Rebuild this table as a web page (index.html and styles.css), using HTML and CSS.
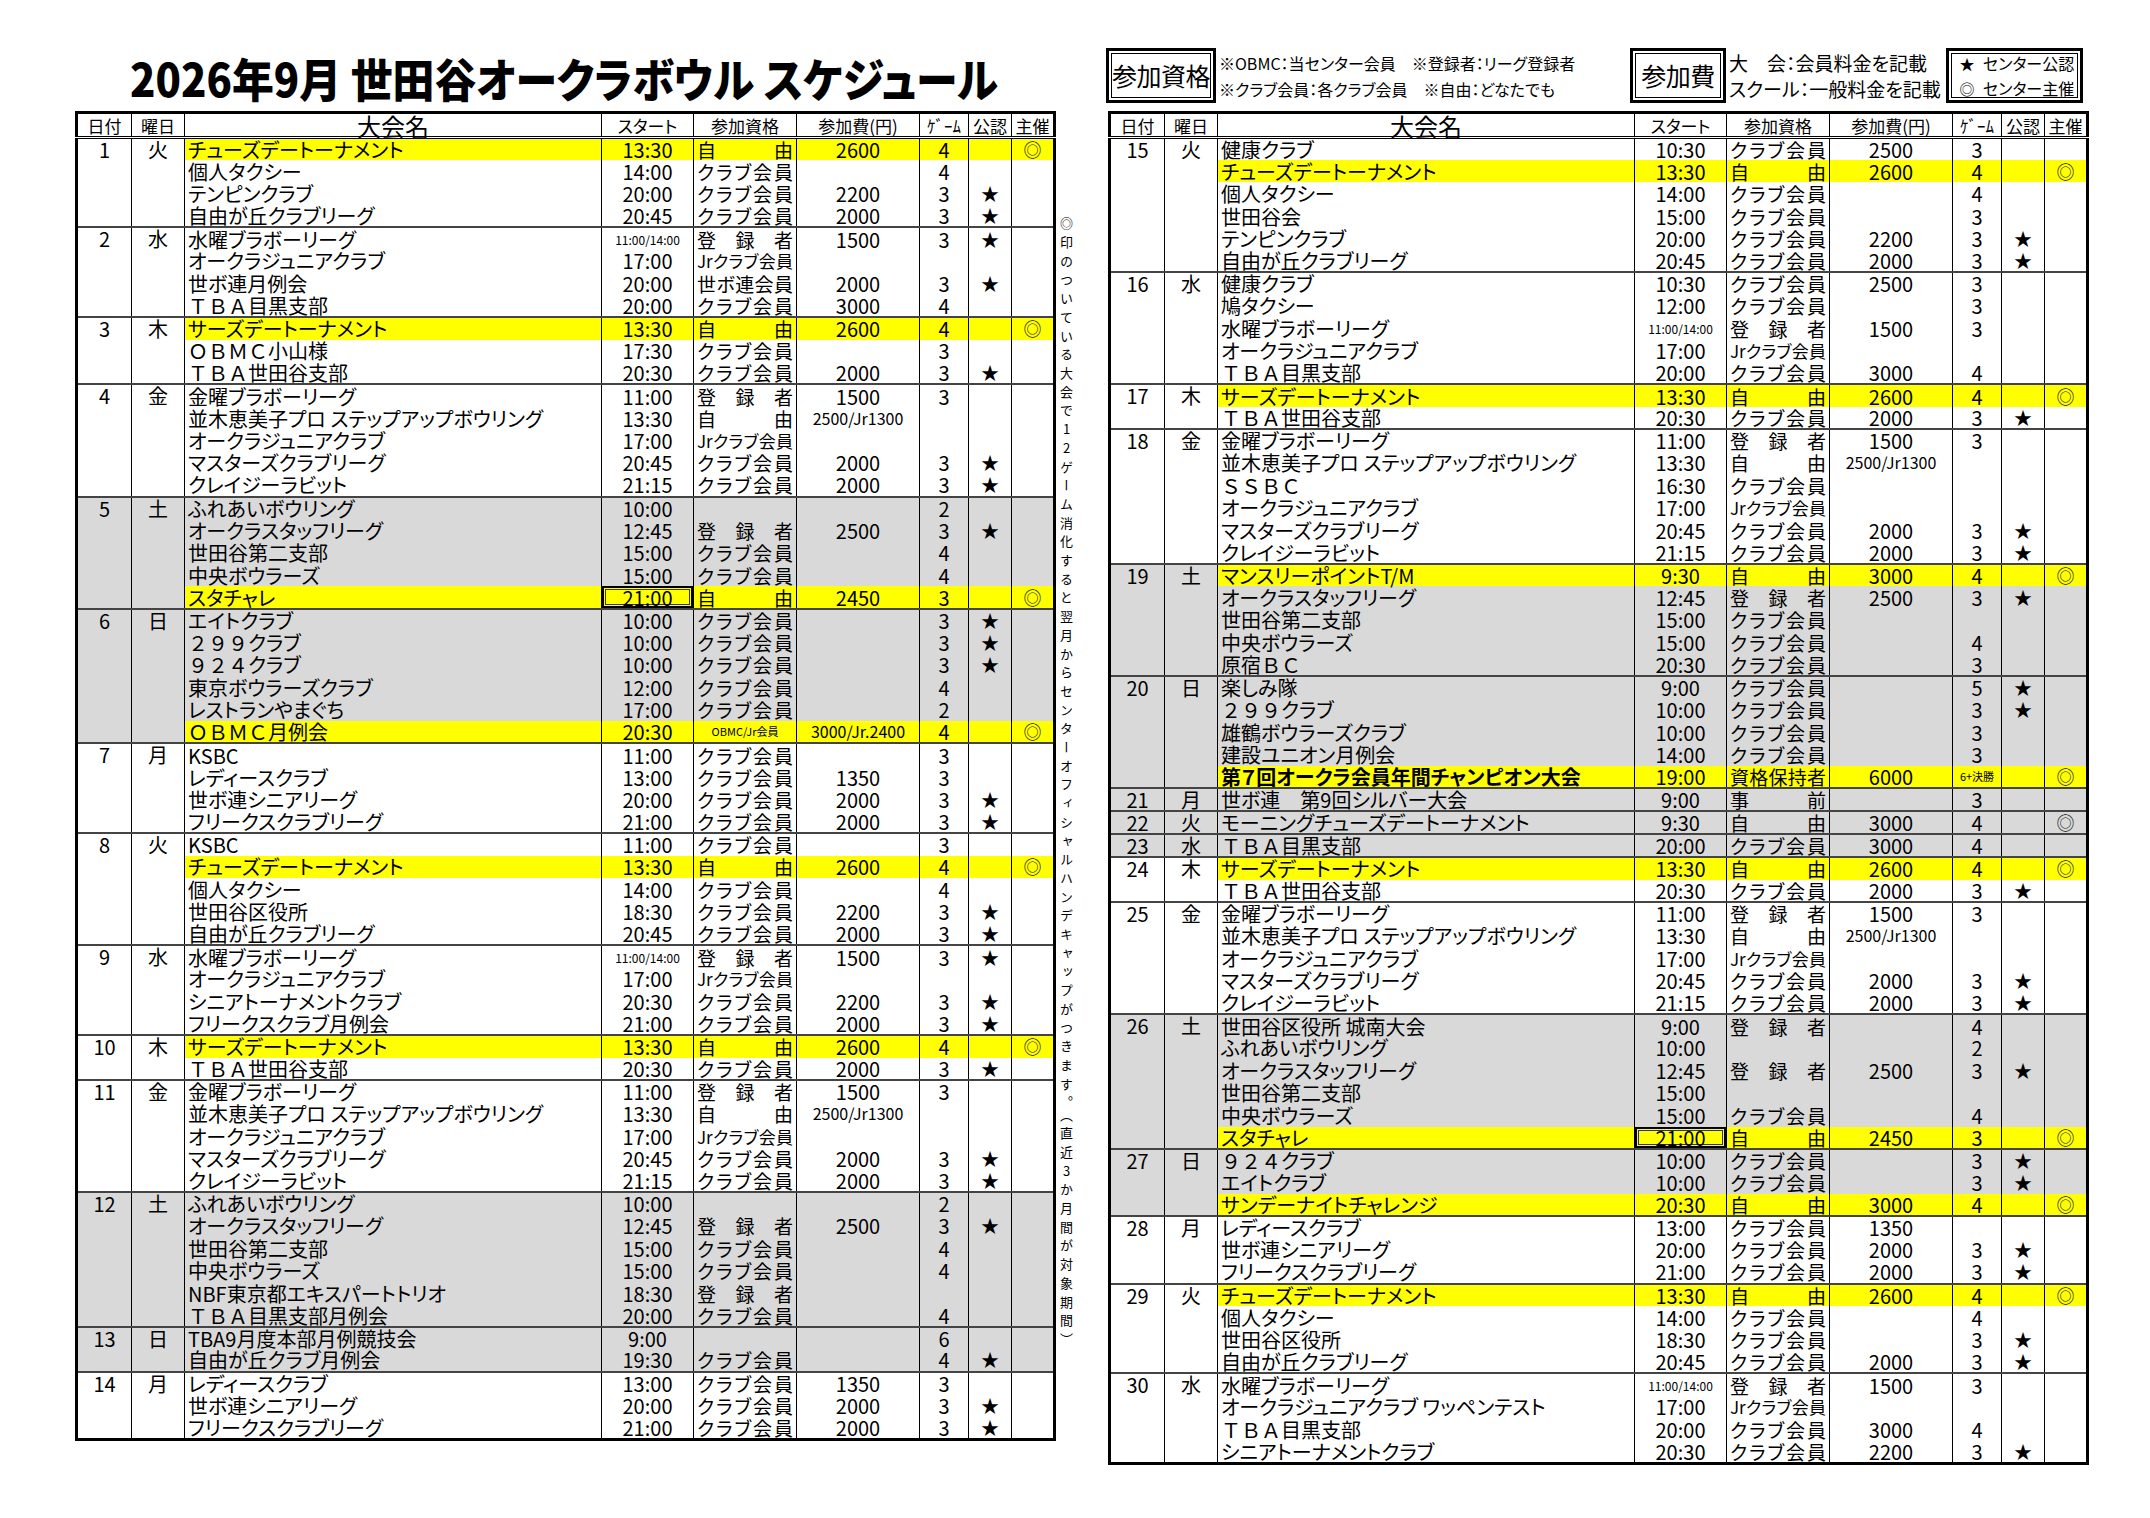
FILE: index.html
```html
<!DOCTYPE html>
<html lang="ja">
<head>
<meta charset="utf-8">
<title>2026年9月 世田谷オークラボウル スケジュール</title>
<link rel="stylesheet" href="styles.css">
</head>
<body>
<div class="page">
  <section class="left">
    <h1 class="title">2026年9月 世田谷オークラボウル スケジュール</h1>
    <table class="tb">
      <colgroup><col class="c1"><col class="c2"><col class="c3"><col class="c4"><col class="c5"><col class="c6"><col class="c7"><col class="c8"><col class="c9"></colgroup>
      <thead><tr><th>日付</th><th>曜日</th><th class="big">大会名</th><th>スタート</th><th>参加資格</th><th>参加費(円)</th><th>ｹﾞｰﾑ</th><th>公認</th><th>主催</th></tr></thead>
      <tbody>
        <tr class="y"><td class="dt" rowspan="4">1</td><td class="wd" rowspan="4">火</td><td class="n">チューズデートーナメント</td><td>13:30</td><td class="q">自 由</td><td>2600</td><td>4</td><td></td><td>◎</td></tr>
        <tr><td class="n">個人タクシー</td><td>14:00</td><td class="q">クラブ会員</td><td></td><td>4</td><td></td><td></td></tr>
        <tr><td class="n">テンピンクラブ</td><td>20:00</td><td class="q">クラブ会員</td><td>2200</td><td>3</td><td>★</td><td></td></tr>
        <tr><td class="n">自由が丘クラブリーグ</td><td>20:45</td><td class="q">クラブ会員</td><td>2000</td><td>3</td><td>★</td><td></td></tr>
      </tbody>
      <tbody>
        <tr><td class="dt" rowspan="4">2</td><td class="wd" rowspan="4">水</td><td class="n">水曜ブラボーリーグ</td><td class="s">11:00/14:00</td><td class="q">登 録 者</td><td>1500</td><td>3</td><td>★</td><td></td></tr>
        <tr><td class="n">オークラジュニアクラブ</td><td>17:00</td><td class="q jr">Jrクラブ会員</td><td></td><td></td><td></td><td></td></tr>
        <tr><td class="n">世ボ連月例会</td><td>20:00</td><td class="q">世ボ連会員</td><td>2000</td><td>3</td><td>★</td><td></td></tr>
        <tr><td class="n"><span class="fw">ＴＢＡ</span>目黒支部</td><td>20:00</td><td class="q">クラブ会員</td><td>3000</td><td>4</td><td></td><td></td></tr>
      </tbody>
      <tbody>
        <tr class="y"><td class="dt" rowspan="3">3</td><td class="wd" rowspan="3">木</td><td class="n">サーズデートーナメント</td><td>13:30</td><td class="q">自 由</td><td>2600</td><td>4</td><td></td><td>◎</td></tr>
        <tr><td class="n"><span class="fw">ＯＢＭＣ</span>小山様</td><td>17:30</td><td class="q">クラブ会員</td><td></td><td>3</td><td></td><td></td></tr>
        <tr><td class="n"><span class="fw">ＴＢＡ</span>世田谷支部</td><td>20:30</td><td class="q">クラブ会員</td><td>2000</td><td>3</td><td>★</td><td></td></tr>
      </tbody>
      <tbody>
        <tr><td class="dt" rowspan="5">4</td><td class="wd" rowspan="5">金</td><td class="n">金曜ブラボーリーグ</td><td>11:00</td><td class="q">登 録 者</td><td>1500</td><td>3</td><td></td><td></td></tr>
        <tr><td class="n">並木恵美子プロ ステップアップボウリング</td><td>13:30</td><td class="q">自 由</td><td class="s2">2500/Jr1300</td><td></td><td></td><td></td></tr>
        <tr><td class="n">オークラジュニアクラブ</td><td>17:00</td><td class="q jr">Jrクラブ会員</td><td></td><td></td><td></td><td></td></tr>
        <tr><td class="n">マスターズクラブリーグ</td><td>20:45</td><td class="q">クラブ会員</td><td>2000</td><td>3</td><td>★</td><td></td></tr>
        <tr><td class="n">クレイジーラビット</td><td>21:15</td><td class="q">クラブ会員</td><td>2000</td><td>3</td><td>★</td><td></td></tr>
      </tbody>
      <tbody class="g">
        <tr><td class="dt" rowspan="5">5</td><td class="wd" rowspan="5">土</td><td class="n">ふれあいボウリング</td><td>10:00</td><td class="q"></td><td></td><td>2</td><td></td><td></td></tr>
        <tr><td class="n">オークラスタッフリーグ</td><td>12:45</td><td class="q">登 録 者</td><td>2500</td><td>3</td><td>★</td><td></td></tr>
        <tr><td class="n">世田谷第二支部</td><td>15:00</td><td class="q">クラブ会員</td><td></td><td>4</td><td></td><td></td></tr>
        <tr><td class="n">中央ボウラーズ</td><td>15:00</td><td class="q">クラブ会員</td><td></td><td>4</td><td></td><td></td></tr>
        <tr class="y"><td class="n">スタチャレ</td><td class="bx">21:00</td><td class="q">自 由</td><td>2450</td><td>3</td><td></td><td>◎</td></tr>
      </tbody>
      <tbody class="g">
        <tr><td class="dt" rowspan="6">6</td><td class="wd" rowspan="6">日</td><td class="n">エイトクラブ</td><td>10:00</td><td class="q">クラブ会員</td><td></td><td>3</td><td>★</td><td></td></tr>
        <tr><td class="n"><span class="fw">２９９</span>クラブ</td><td>10:00</td><td class="q">クラブ会員</td><td></td><td>3</td><td>★</td><td></td></tr>
        <tr><td class="n"><span class="fw">９２４</span>クラブ</td><td>10:00</td><td class="q">クラブ会員</td><td></td><td>3</td><td>★</td><td></td></tr>
        <tr><td class="n">東京ボウラーズクラブ</td><td>12:00</td><td class="q">クラブ会員</td><td></td><td>4</td><td></td><td></td></tr>
        <tr><td class="n">レストランやまぐち</td><td>17:00</td><td class="q">クラブ会員</td><td></td><td>2</td><td></td><td></td></tr>
        <tr class="y"><td class="n"><span class="fw">ＯＢＭＣ</span>月例会</td><td>20:30</td><td class="q s3">OBMC/Jr会員</td><td class="s2">3000/Jr.2400</td><td>4</td><td></td><td>◎</td></tr>
      </tbody>
      <tbody>
        <tr><td class="dt" rowspan="4">7</td><td class="wd" rowspan="4">月</td><td class="n">KSBC</td><td>11:00</td><td class="q">クラブ会員</td><td></td><td>3</td><td></td><td></td></tr>
        <tr><td class="n">レディースクラブ</td><td>13:00</td><td class="q">クラブ会員</td><td>1350</td><td>3</td><td></td><td></td></tr>
        <tr><td class="n">世ボ連シニアリーグ</td><td>20:00</td><td class="q">クラブ会員</td><td>2000</td><td>3</td><td>★</td><td></td></tr>
        <tr><td class="n">フリークスクラブリーグ</td><td>21:00</td><td class="q">クラブ会員</td><td>2000</td><td>3</td><td>★</td><td></td></tr>
      </tbody>
      <tbody>
        <tr><td class="dt" rowspan="5">8</td><td class="wd" rowspan="5">火</td><td class="n">KSBC</td><td>11:00</td><td class="q">クラブ会員</td><td></td><td>3</td><td></td><td></td></tr>
        <tr class="y"><td class="n">チューズデートーナメント</td><td>13:30</td><td class="q">自 由</td><td>2600</td><td>4</td><td></td><td>◎</td></tr>
        <tr><td class="n">個人タクシー</td><td>14:00</td><td class="q">クラブ会員</td><td></td><td>4</td><td></td><td></td></tr>
        <tr><td class="n">世田谷区役所</td><td>18:30</td><td class="q">クラブ会員</td><td>2200</td><td>3</td><td>★</td><td></td></tr>
        <tr><td class="n">自由が丘クラブリーグ</td><td>20:45</td><td class="q">クラブ会員</td><td>2000</td><td>3</td><td>★</td><td></td></tr>
      </tbody>
      <tbody>
        <tr><td class="dt" rowspan="4">9</td><td class="wd" rowspan="4">水</td><td class="n">水曜ブラボーリーグ</td><td class="s">11:00/14:00</td><td class="q">登 録 者</td><td>1500</td><td>3</td><td>★</td><td></td></tr>
        <tr><td class="n">オークラジュニアクラブ</td><td>17:00</td><td class="q jr">Jrクラブ会員</td><td></td><td></td><td></td><td></td></tr>
        <tr><td class="n">シニアトーナメントクラブ</td><td>20:30</td><td class="q">クラブ会員</td><td>2200</td><td>3</td><td>★</td><td></td></tr>
        <tr><td class="n">フリークスクラブ月例会</td><td>21:00</td><td class="q">クラブ会員</td><td>2000</td><td>3</td><td>★</td><td></td></tr>
      </tbody>
      <tbody>
        <tr class="y"><td class="dt" rowspan="2">10</td><td class="wd" rowspan="2">木</td><td class="n">サーズデートーナメント</td><td>13:30</td><td class="q">自 由</td><td>2600</td><td>4</td><td></td><td>◎</td></tr>
        <tr><td class="n"><span class="fw">ＴＢＡ</span>世田谷支部</td><td>20:30</td><td class="q">クラブ会員</td><td>2000</td><td>3</td><td>★</td><td></td></tr>
      </tbody>
      <tbody>
        <tr><td class="dt" rowspan="5">11</td><td class="wd" rowspan="5">金</td><td class="n">金曜ブラボーリーグ</td><td>11:00</td><td class="q">登 録 者</td><td>1500</td><td>3</td><td></td><td></td></tr>
        <tr><td class="n">並木恵美子プロ ステップアップボウリング</td><td>13:30</td><td class="q">自 由</td><td class="s2">2500/Jr1300</td><td></td><td></td><td></td></tr>
        <tr><td class="n">オークラジュニアクラブ</td><td>17:00</td><td class="q jr">Jrクラブ会員</td><td></td><td></td><td></td><td></td></tr>
        <tr><td class="n">マスターズクラブリーグ</td><td>20:45</td><td class="q">クラブ会員</td><td>2000</td><td>3</td><td>★</td><td></td></tr>
        <tr><td class="n">クレイジーラビット</td><td>21:15</td><td class="q">クラブ会員</td><td>2000</td><td>3</td><td>★</td><td></td></tr>
      </tbody>
      <tbody class="g">
        <tr><td class="dt" rowspan="6">12</td><td class="wd" rowspan="6">土</td><td class="n">ふれあいボウリング</td><td>10:00</td><td class="q"></td><td></td><td>2</td><td></td><td></td></tr>
        <tr><td class="n">オークラスタッフリーグ</td><td>12:45</td><td class="q">登 録 者</td><td>2500</td><td>3</td><td>★</td><td></td></tr>
        <tr><td class="n">世田谷第二支部</td><td>15:00</td><td class="q">クラブ会員</td><td></td><td>4</td><td></td><td></td></tr>
        <tr><td class="n">中央ボウラーズ</td><td>15:00</td><td class="q">クラブ会員</td><td></td><td>4</td><td></td><td></td></tr>
        <tr><td class="n">NBF東京都エキスパートトリオ</td><td>18:30</td><td class="q">登 録 者</td><td></td><td></td><td></td><td></td></tr>
        <tr><td class="n"><span class="fw">ＴＢＡ</span>目黒支部月例会</td><td>20:00</td><td class="q">クラブ会員</td><td></td><td>4</td><td></td><td></td></tr>
      </tbody>
      <tbody class="g">
        <tr><td class="dt" rowspan="2">13</td><td class="wd" rowspan="2">日</td><td class="n">TBA9月度本部月例競技会</td><td>9:00</td><td class="q"></td><td></td><td>6</td><td></td><td></td></tr>
        <tr><td class="n">自由が丘クラブ月例会</td><td>19:30</td><td class="q">クラブ会員</td><td></td><td>4</td><td>★</td><td></td></tr>
      </tbody>
      <tbody>
        <tr><td class="dt" rowspan="3">14</td><td class="wd" rowspan="3">月</td><td class="n">レディースクラブ</td><td>13:00</td><td class="q">クラブ会員</td><td>1350</td><td>3</td><td></td><td></td></tr>
        <tr><td class="n">世ボ連シニアリーグ</td><td>20:00</td><td class="q">クラブ会員</td><td>2000</td><td>3</td><td>★</td><td></td></tr>
        <tr><td class="n">フリークスクラブリーグ</td><td>21:00</td><td class="q">クラブ会員</td><td>2000</td><td>3</td><td>★</td><td></td></tr>
      </tbody>
    </table>
  </section>

  <aside class="note"><p class="vt">◎印のついている大会で12ゲーム消化すると翌月からセンターオフィシャルハンデキャップがつきます。（直近3か月間が対象期間）</p></aside>

  <section class="right">
    <div class="legend">
      <div class="box b1"><div class="inner">参加資格</div></div>
      <div class="ltxt l1"><p>※OBMC：当センター会員　※登録者：リーグ登録者</p><p>※クラブ会員：各クラブ会員　※自由：どなたでも</p></div>
      <div class="box b2"><div class="inner">参加費</div></div>
      <div class="ltxt l2"><p>大　会：会員料金を記載</p><p>スクール：一般料金を記載</p></div>
      <div class="box b3"><div class="inner col"><p><span class="mk">★</span>センター公認</p><p><span class="mk">◎</span>センター主催</p></div></div>
    </div>
    <table class="tb">
      <colgroup><col class="c1"><col class="c2"><col class="c3"><col class="c4"><col class="c5"><col class="c6"><col class="c7"><col class="c8"><col class="c9"></colgroup>
      <thead><tr><th>日付</th><th>曜日</th><th class="big">大会名</th><th>スタート</th><th>参加資格</th><th>参加費(円)</th><th>ｹﾞｰﾑ</th><th>公認</th><th>主催</th></tr></thead>
      <tbody>
        <tr><td class="dt" rowspan="6">15</td><td class="wd" rowspan="6">火</td><td class="n">健康クラブ</td><td>10:30</td><td class="q">クラブ会員</td><td>2500</td><td>3</td><td></td><td></td></tr>
        <tr class="y"><td class="n">チューズデートーナメント</td><td>13:30</td><td class="q">自 由</td><td>2600</td><td>4</td><td></td><td>◎</td></tr>
        <tr><td class="n">個人タクシー</td><td>14:00</td><td class="q">クラブ会員</td><td></td><td>4</td><td></td><td></td></tr>
        <tr><td class="n">世田谷会</td><td>15:00</td><td class="q">クラブ会員</td><td></td><td>3</td><td></td><td></td></tr>
        <tr><td class="n">テンピンクラブ</td><td>20:00</td><td class="q">クラブ会員</td><td>2200</td><td>3</td><td>★</td><td></td></tr>
        <tr><td class="n">自由が丘クラブリーグ</td><td>20:45</td><td class="q">クラブ会員</td><td>2000</td><td>3</td><td>★</td><td></td></tr>
      </tbody>
      <tbody>
        <tr><td class="dt" rowspan="5">16</td><td class="wd" rowspan="5">水</td><td class="n">健康クラブ</td><td>10:30</td><td class="q">クラブ会員</td><td>2500</td><td>3</td><td></td><td></td></tr>
        <tr><td class="n">鳩タクシー</td><td>12:00</td><td class="q">クラブ会員</td><td></td><td>3</td><td></td><td></td></tr>
        <tr><td class="n">水曜ブラボーリーグ</td><td class="s">11:00/14:00</td><td class="q">登 録 者</td><td>1500</td><td>3</td><td></td><td></td></tr>
        <tr><td class="n">オークラジュニアクラブ</td><td>17:00</td><td class="q jr">Jrクラブ会員</td><td></td><td></td><td></td><td></td></tr>
        <tr><td class="n"><span class="fw">ＴＢＡ</span>目黒支部</td><td>20:00</td><td class="q">クラブ会員</td><td>3000</td><td>4</td><td></td><td></td></tr>
      </tbody>
      <tbody>
        <tr class="y"><td class="dt" rowspan="2">17</td><td class="wd" rowspan="2">木</td><td class="n">サーズデートーナメント</td><td>13:30</td><td class="q">自 由</td><td>2600</td><td>4</td><td></td><td>◎</td></tr>
        <tr><td class="n"><span class="fw">ＴＢＡ</span>世田谷支部</td><td>20:30</td><td class="q">クラブ会員</td><td>2000</td><td>3</td><td>★</td><td></td></tr>
      </tbody>
      <tbody>
        <tr><td class="dt" rowspan="6">18</td><td class="wd" rowspan="6">金</td><td class="n">金曜ブラボーリーグ</td><td>11:00</td><td class="q">登 録 者</td><td>1500</td><td>3</td><td></td><td></td></tr>
        <tr><td class="n">並木恵美子プロ ステップアップボウリング</td><td>13:30</td><td class="q">自 由</td><td class="s2">2500/Jr1300</td><td></td><td></td><td></td></tr>
        <tr><td class="n"><span class="fw">ＳＳＢＣ</span></td><td>16:30</td><td class="q">クラブ会員</td><td></td><td></td><td></td><td></td></tr>
        <tr><td class="n">オークラジュニアクラブ</td><td>17:00</td><td class="q jr">Jrクラブ会員</td><td></td><td></td><td></td><td></td></tr>
        <tr><td class="n">マスターズクラブリーグ</td><td>20:45</td><td class="q">クラブ会員</td><td>2000</td><td>3</td><td>★</td><td></td></tr>
        <tr><td class="n">クレイジーラビット</td><td>21:15</td><td class="q">クラブ会員</td><td>2000</td><td>3</td><td>★</td><td></td></tr>
      </tbody>
      <tbody class="g">
        <tr class="y"><td class="dt" rowspan="5">19</td><td class="wd" rowspan="5">土</td><td class="n">マンスリーポイントT/M</td><td>9:30</td><td class="q">自 由</td><td>3000</td><td>4</td><td></td><td>◎</td></tr>
        <tr><td class="n">オークラスタッフリーグ</td><td>12:45</td><td class="q">登 録 者</td><td>2500</td><td>3</td><td>★</td><td></td></tr>
        <tr><td class="n">世田谷第二支部</td><td>15:00</td><td class="q">クラブ会員</td><td></td><td></td><td></td><td></td></tr>
        <tr><td class="n">中央ボウラーズ</td><td>15:00</td><td class="q">クラブ会員</td><td></td><td>4</td><td></td><td></td></tr>
        <tr><td class="n">原宿<span class="fw">ＢＣ</span></td><td>20:30</td><td class="q">クラブ会員</td><td></td><td>3</td><td></td><td></td></tr>
      </tbody>
      <tbody class="g">
        <tr><td class="dt" rowspan="5">20</td><td class="wd" rowspan="5">日</td><td class="n">楽しみ隊</td><td>9:00</td><td class="q">クラブ会員</td><td></td><td>5</td><td>★</td><td></td></tr>
        <tr><td class="n"><span class="fw">２９９</span>クラブ</td><td>10:00</td><td class="q">クラブ会員</td><td></td><td>3</td><td>★</td><td></td></tr>
        <tr><td class="n">雄鶴ボウラーズクラブ</td><td>10:00</td><td class="q">クラブ会員</td><td></td><td>3</td><td></td><td></td></tr>
        <tr><td class="n">建設ユニオン月例会</td><td>14:00</td><td class="q">クラブ会員</td><td></td><td>3</td><td></td><td></td></tr>
        <tr class="y"><td class="n bold">第７回オークラ会員年間チャンピオン大会</td><td>19:00</td><td class="q">資格保持者</td><td>6000</td><td class="s3">6+決勝</td><td></td><td>◎</td></tr>
      </tbody>
      <tbody class="g">
        <tr><td class="dt">21</td><td class="wd">月</td><td class="n">世ボ連　第9回シルバー大会</td><td>9:00</td><td class="q">事 前</td><td></td><td>3</td><td></td><td></td></tr>
      </tbody>
      <tbody class="g">
        <tr><td class="dt">22</td><td class="wd">火</td><td class="n">モーニングチューズデートーナメント</td><td>9:30</td><td class="q">自 由</td><td>3000</td><td>4</td><td></td><td>◎</td></tr>
      </tbody>
      <tbody class="g">
        <tr><td class="dt">23</td><td class="wd">水</td><td class="n"><span class="fw">ＴＢＡ</span>目黒支部</td><td>20:00</td><td class="q">クラブ会員</td><td>3000</td><td>4</td><td></td><td></td></tr>
      </tbody>
      <tbody>
        <tr class="y"><td class="dt" rowspan="2">24</td><td class="wd" rowspan="2">木</td><td class="n">サーズデートーナメント</td><td>13:30</td><td class="q">自 由</td><td>2600</td><td>4</td><td></td><td>◎</td></tr>
        <tr><td class="n"><span class="fw">ＴＢＡ</span>世田谷支部</td><td>20:30</td><td class="q">クラブ会員</td><td>2000</td><td>3</td><td>★</td><td></td></tr>
      </tbody>
      <tbody>
        <tr><td class="dt" rowspan="5">25</td><td class="wd" rowspan="5">金</td><td class="n">金曜ブラボーリーグ</td><td>11:00</td><td class="q">登 録 者</td><td>1500</td><td>3</td><td></td><td></td></tr>
        <tr><td class="n">並木恵美子プロ ステップアップボウリング</td><td>13:30</td><td class="q">自 由</td><td class="s2">2500/Jr1300</td><td></td><td></td><td></td></tr>
        <tr><td class="n">オークラジュニアクラブ</td><td>17:00</td><td class="q jr">Jrクラブ会員</td><td></td><td></td><td></td><td></td></tr>
        <tr><td class="n">マスターズクラブリーグ</td><td>20:45</td><td class="q">クラブ会員</td><td>2000</td><td>3</td><td>★</td><td></td></tr>
        <tr><td class="n">クレイジーラビット</td><td>21:15</td><td class="q">クラブ会員</td><td>2000</td><td>3</td><td>★</td><td></td></tr>
      </tbody>
      <tbody class="g">
        <tr><td class="dt" rowspan="6">26</td><td class="wd" rowspan="6">土</td><td class="n">世田谷区役所 城南大会</td><td>9:00</td><td class="q">登 録 者</td><td></td><td>4</td><td></td><td></td></tr>
        <tr><td class="n">ふれあいボウリング</td><td>10:00</td><td class="q"></td><td></td><td>2</td><td></td><td></td></tr>
        <tr><td class="n">オークラスタッフリーグ</td><td>12:45</td><td class="q">登 録 者</td><td>2500</td><td>3</td><td>★</td><td></td></tr>
        <tr><td class="n">世田谷第二支部</td><td>15:00</td><td class="q"></td><td></td><td></td><td></td><td></td></tr>
        <tr><td class="n">中央ボウラーズ</td><td>15:00</td><td class="q">クラブ会員</td><td></td><td>4</td><td></td><td></td></tr>
        <tr class="y"><td class="n">スタチャレ</td><td class="bx">21:00</td><td class="q">自 由</td><td>2450</td><td>3</td><td></td><td>◎</td></tr>
      </tbody>
      <tbody class="g">
        <tr><td class="dt" rowspan="3">27</td><td class="wd" rowspan="3">日</td><td class="n"><span class="fw">９２４</span>クラブ</td><td>10:00</td><td class="q">クラブ会員</td><td></td><td>3</td><td>★</td><td></td></tr>
        <tr><td class="n">エイトクラブ</td><td>10:00</td><td class="q">クラブ会員</td><td></td><td>3</td><td>★</td><td></td></tr>
        <tr class="y"><td class="n">サンデーナイトチャレンジ</td><td>20:30</td><td class="q">自 由</td><td>3000</td><td>4</td><td></td><td>◎</td></tr>
      </tbody>
      <tbody>
        <tr><td class="dt" rowspan="3">28</td><td class="wd" rowspan="3">月</td><td class="n">レディースクラブ</td><td>13:00</td><td class="q">クラブ会員</td><td>1350</td><td></td><td></td><td></td></tr>
        <tr><td class="n">世ボ連シニアリーグ</td><td>20:00</td><td class="q">クラブ会員</td><td>2000</td><td>3</td><td>★</td><td></td></tr>
        <tr><td class="n">フリークスクラブリーグ</td><td>21:00</td><td class="q">クラブ会員</td><td>2000</td><td>3</td><td>★</td><td></td></tr>
      </tbody>
      <tbody>
        <tr class="y"><td class="dt" rowspan="4">29</td><td class="wd" rowspan="4">火</td><td class="n">チューズデートーナメント</td><td>13:30</td><td class="q">自 由</td><td>2600</td><td>4</td><td></td><td>◎</td></tr>
        <tr><td class="n">個人タクシー</td><td>14:00</td><td class="q">クラブ会員</td><td></td><td>4</td><td></td><td></td></tr>
        <tr><td class="n">世田谷区役所</td><td>18:30</td><td class="q">クラブ会員</td><td></td><td>3</td><td>★</td><td></td></tr>
        <tr><td class="n">自由が丘クラブリーグ</td><td>20:45</td><td class="q">クラブ会員</td><td>2000</td><td>3</td><td>★</td><td></td></tr>
      </tbody>
      <tbody>
        <tr><td class="dt" rowspan="4">30</td><td class="wd" rowspan="4">水</td><td class="n">水曜ブラボーリーグ</td><td class="s">11:00/14:00</td><td class="q">登 録 者</td><td>1500</td><td>3</td><td></td><td></td></tr>
        <tr><td class="n">オークラジュニアクラブ ワッペンテスト</td><td>17:00</td><td class="q jr">Jrクラブ会員</td><td></td><td></td><td></td><td></td></tr>
        <tr><td class="n"><span class="fw">ＴＢＡ</span>目黒支部</td><td>20:00</td><td class="q">クラブ会員</td><td>3000</td><td>4</td><td></td><td></td></tr>
        <tr><td class="n">シニアトーナメントクラブ</td><td>20:30</td><td class="q">クラブ会員</td><td>2200</td><td>3</td><td>★</td><td></td></tr>
      </tbody>
    </table>
  </section>
</div>
</body>
</html>
```

FILE: styles.css
```css
* { box-sizing: border-box; }
html, body { margin: 0; padding: 0; background: #fff; }
body {
  color: #000;
  font-family: "Noto Sans CJK JP", "Noto Sans", sans-serif;
  font-feature-settings: "palt";
}
p { margin: 0; }

.page {
  display: flex;
  align-items: flex-start;
  width: 2150px;
  height: 1518px;
  padding-left: 75px;
}

.left, .right { width: 978px; flex: none; }

.title {
  margin: 52px 0 9px;
  height: 50px;
  line-height: 50px;
  font-size: 46px;
  font-weight: 900;
  text-align: center;
  white-space: nowrap;
  transform: scaleX(0.91);
}

.note { width: 55px; flex: none; padding: 217px 0 0 7px; }
.vt {
  writing-mode: vertical-rl;
  text-orientation: upright;
  font-size: 13px;
  line-height: 13px;
  letter-spacing: 5.7px;
  font-feature-settings: normal;
}

/* legend */
.legend { display: flex; height: 55px; margin: 48px 0 8px -2px; }
.box { border: 3px solid #000; padding: 2px; display: flex; flex: none; }
.box .inner {
  flex: 1;
  border: 1.5px solid #000;
  display: flex;
  align-items: center;
  justify-content: center;
  font-size: 25px;
  line-height: 1;
  letter-spacing: -0.5px;
  white-space: nowrap;
}
.b1 { width: 110px; }
.b2 { width: 96px; }
.b3 { width: 137px; }
.box .inner.col {
  flex-direction: column;
  align-items: flex-start;
  justify-content: center;
  padding-left: 7px;
  font-size: 16px;
  line-height: 20px;
  gap: 4px;
  letter-spacing: 0;
}
.mk { display: inline-block; width: 16px; margin-right: 8px; text-align: center; font-size: 15px; }
.ltxt { display: flex; flex-direction: column; justify-content: center; gap: 6px; white-space: nowrap; }
.l1 { width: 414px; padding-left: 3px; font-size: 16px; line-height: 20px; }
.l2 { width: 220px; padding-left: 3px; font-size: 19px; line-height: 22px; gap: 4px; }

/* tables */
.tb {
  width: 978px;
  border-collapse: collapse;
  table-layout: fixed;
  border: 3px solid #000;
}
.c1 { width: 55px; } .c2 { width: 53px; } .c3 { width: 417px; }
.c4 { width: 92px; } .c5 { width: 103px; } .c6 { width: 123px; }
.c7 { width: 49px; } .c8 { width: 43px; } .c9 { width: 43px; }

.tb th {
  height: 25px;
  padding: 0;
  font-size: 17px;
  font-weight: 400;
  line-height: 21px;
  border: 1px solid #000;
  border-bottom: 3px double #000;
  white-space: nowrap;
}
.tb th.big { font-size: 24px; line-height: 21px; }

.tb tbody tr { height: 22.45px; }
.tb td {
  padding: 0 3px;
  font-size: 20px;
  line-height: 21px;
  text-align: center;
  vertical-align: middle;
  white-space: nowrap;
  border-left: 1px solid #000;
  border-right: 1px solid #000;
  background: #fff;
}
.tb td:nth-last-child(2) { font-size: 18px; }
.tb td:last-child { font-size: 18px; color: #222; }
.tb tbody + tbody { border-top: 2px solid #444; }

.tb td.dt, .tb td.wd { vertical-align: top; }
.tb td.n { text-align: left; padding-left: 3px; }
.tb td.q { text-align: justify; text-align-last: justify; font-size: 19px; }
.tb td.q.jr { font-size: 17px; }
.tb td.q.s3, .tb td.s3 { font-size: 11px; text-align: center; text-align-last: center; }
.tb td.s { font-size: 12px; padding: 0; }
.tb td.s2 { font-size: 16px; padding: 0; }
.tb td.bold { font-weight: 700; }
.tb td.bx { box-shadow: inset 0 0 0 2px #000, inset 0 0 0 3px #ff0, inset 0 0 0 4px #333; }
.fw { font-feature-settings: normal; }

/* fills */
.tb tbody.g td { background: #d9d9d9; }
.tb tr.y td { background: #ff0; }
.tb tr td.dt, .tb tr td.wd { background: #fff; }
.tb tbody.g tr td.dt, .tb tbody.g tr td.wd { background: #d9d9d9; }
```
